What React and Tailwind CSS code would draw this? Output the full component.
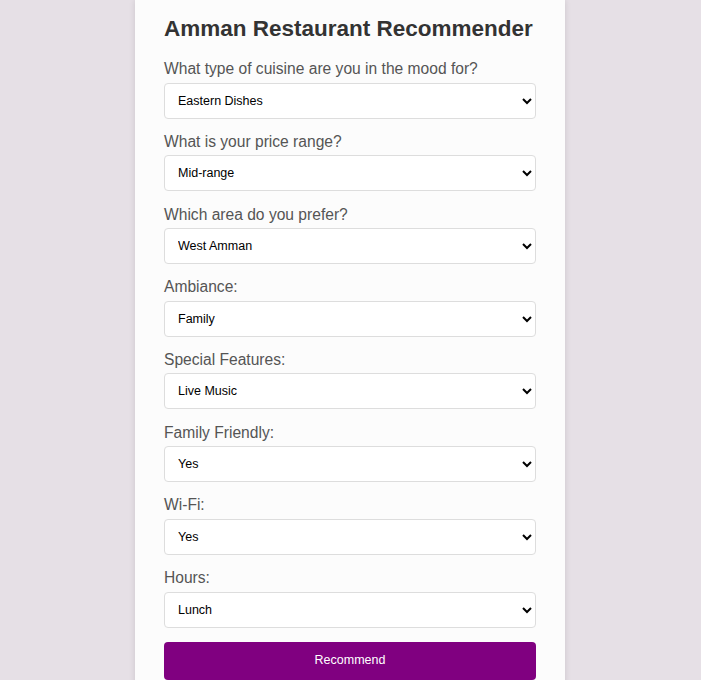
import React from 'react'

const fields = [
    { label: 'What type of cuisine are you in the mood for?', value: 'Eastern Dishes', options: ['Eastern Dishes', 'Western Dishes', 'Fast Food', 'Seafood', 'Desserts'] },
    { label: 'What is your price range?', value: 'Mid-range', options: ['Budget', 'Mid-range', 'Expensive'] },
    { label: 'Which area do you prefer?', value: 'West Amman', options: ['West Amman', 'East Amman', 'Downtown'] },
    { label: 'Ambiance:', value: 'Family', options: ['Family', 'Romantic', 'Casual', 'Formal'] },
    { label: 'Special Features:', value: 'Live Music', options: ['Live Music', 'Outdoor Seating', 'Shisha', 'None'] },
    { label: 'Family Friendly:', value: 'Yes', options: ['Yes', 'No'] },
    { label: 'Wi-Fi:', value: 'Yes', options: ['Yes', 'No'] },
    { label: 'Hours:', value: 'Lunch', options: ['Breakfast', 'Lunch', 'Dinner', 'Late Night'] },
]

export default function App() {
    return (
        <div className="min-h-screen bg-[#e6e0e6] flex justify-center pr-[1px] font-['Liberation_Sans',Arial,sans-serif]">
            {/* Card */}
            <div className="w-[430px] bg-[#fcfcfc] shadow-[0_0_6px_rgba(0,0,0,0.12)] px-[29px] pt-[15.6px] pb-[30px]">
                <h2 className="text-[22.5px] leading-[25.9px] font-bold text-[#333]">Amman Restaurant Recommender</h2>

                <form className="mt-[18.7px]" onSubmit={e => e.preventDefault()}>
                    {fields.map(f => (
                        <div key={f.label} className="mb-[14.2px]">
                            <label className="block text-[15.6px] leading-[18px] text-[#555] mb-[4.5px]">{f.label}</label>
                            <select
                                defaultValue={f.value}
                                className="block w-full h-[36px] pl-[9px] pr-[10px] bg-white border border-[#ddd] rounded-[4px] text-[12.5px] text-black"
                            >
                                {f.options.map(o => <option key={o}>{o}</option>)}
                            </select>
                        </div>
                    ))}
                    <button
                        type="submit"
                        className="block w-full h-[38px] mt-[0.6px] bg-[#800080] rounded-[4px] text-white text-[12.5px]"
                    >
                        Recommend
                    </button>
                </form>
            </div>
        </div>
    )
}
